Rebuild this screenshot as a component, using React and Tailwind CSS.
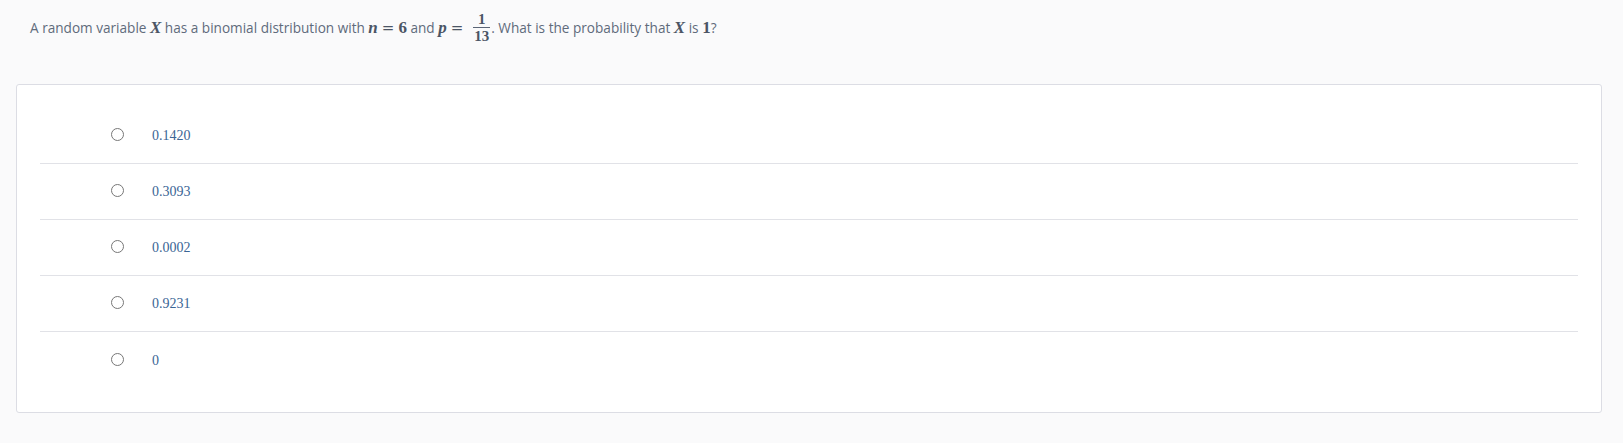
import React from "react";

const options = ["0.1420", "0.3093", "0.0002", "0.9231", "0"];

function Frac({ num, den }) {
  return (
    <span className="inline-flex flex-col items-center align-middle ml-[6px] mr-[1px] relative top-[-2px]">
      <span className="text-[15px] leading-[14px] font-bold px-[1px]">{num}</span>
      <span className="block w-full h-px bg-[#5b6576] my-[1px]" />
      <span className="text-[15px] leading-[14px] font-bold px-[1px]">{den}</span>
    </span>
  );
}

export default function App() {
  const math = "font-['Liberation_Serif',serif] text-[#4b5565]";
  const eq = "font-['DejaVu_Serif',serif] text-[#4b5565] text-[15px] mx-[4px]";
  return (
    <div className="min-h-[443px] w-[1623px] bg-[#fafafb] font-['Open_Sans',sans-serif]">
      <div className="pl-[30px] pt-[14px] h-[84px] text-[13.6px] text-[#5f6b7b] leading-[22px]">
        A random variable{" "}
        <span className={`${math} italic font-bold text-[17px]`}>X</span> has a binomial distribution with{" "}
        <span className={`${math} italic font-bold text-[17px]`}>n</span>
        <span className={eq}>=</span>
        <span className={`${math} font-bold text-[17px]`}>6</span> and{" "}
        <span className={`${math} italic font-bold text-[17px]`}>p</span>
        <span className={eq}>=</span>
        <span className={math}>
          <Frac num="1" den="13" />
        </span>
        . What is the probability that{" "}
        <span className={`${math} italic font-bold text-[17px]`}>X</span> is{" "}
        <span className={`${math} font-bold text-[17px]`}>1</span>?
      </div>
      <div className="ml-[16px] mr-[21px] h-[329px] bg-white border border-[#dcdde4] rounded-[3px] pt-[23px] px-[23px]">
        {options.map((o, i) => (
          <div
            key={o}
            className={`h-[56px] flex items-center ${i < options.length - 1 ? "border-b border-[#e1e2e7]" : ""}`}
          >
            <span className="ml-[71px] w-[13px] h-[13px] rounded-full border border-[#777] bg-white shrink-0 relative top-[-1px]" />
            <span className="ml-[28px] font-['Liberation_Serif',serif] text-[14px] text-[#3a6595]">{o}</span>
          </div>
        ))}
      </div>
    </div>
  );
}
